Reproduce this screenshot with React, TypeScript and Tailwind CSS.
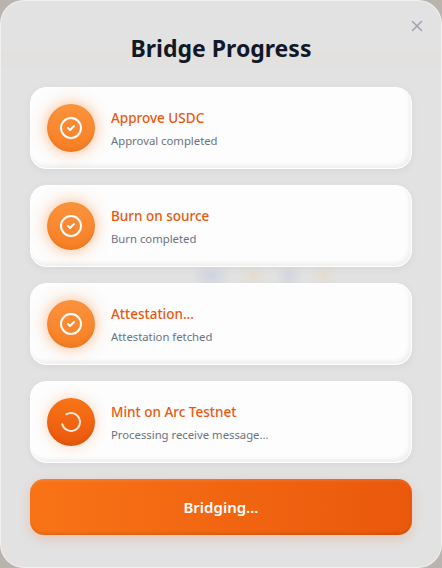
import { X } from 'lucide-react'

const steps = [
  { title: 'Approve USDC', detail: 'Approval completed', done: true },
  { title: 'Burn on source', detail: 'Burn completed', done: true },
  { title: 'Attestation...', detail: 'Attestation fetched', done: true },
  { title: 'Mint on Arc Testnet', detail: 'Processing receive message...', done: false },
]

function StepIcon({ done }: { done: boolean }) {
  if (!done) {
    return (
      <div className="flex h-12 w-12 shrink-0 items-center justify-center rounded-full bg-gradient-to-b from-[#f97316] to-[#ea580c] shadow-[0_0_14px_rgba(249,115,22,0.3),inset_0_-3px_5px_rgba(0,0,0,0.06)]">
        <svg width="24" height="24" viewBox="0 0 24 24" fill="none" stroke="#ffe9d8" strokeWidth="2" strokeLinecap="round">
          <path d="M7.3 4.3 A9 9 0 1 1 3.3 14.3" />
        </svg>
      </div>
    )
  }
  return (
    <div className="flex h-12 w-12 shrink-0 items-center justify-center rounded-full bg-gradient-to-b from-[#fb923c] to-[#f97f22] shadow-[0_0_16px_rgba(249,115,22,0.5),inset_0_-3px_5px_rgba(0,0,0,0.06)]">
      <svg width="24" height="24" viewBox="0 0 24 24" fill="none" stroke="#fff" strokeWidth="2" strokeLinecap="round" strokeLinejoin="round">
        <circle cx="12" cy="12" r="10" />
        <path d="M9 12l2 2 4-4" />
      </svg>
    </div>
  )
}

export default function App() {
  return (
    <div className="h-[568px] w-[442px] overflow-hidden bg-[#b9b4ad] font-['Noto_Sans',sans-serif]">
      <div className="relative flex h-full flex-col gap-4 rounded-3xl border border-white/50 bg-[#e2e2e2] bg-[radial-gradient(ellipse_20px_12px_at_210px_275px,#cfd3e2,transparent),radial-gradient(ellipse_13px_12px_at_252px_275px,#e6dccf,transparent),radial-gradient(ellipse_14px_12px_at_288px_275px,#d2d5e0,transparent),radial-gradient(ellipse_13px_12px_at_322px_275px,#e6dccf,transparent),linear-gradient(to_bottom,transparent_40px,#e3e1de_52px,transparent_70px)] px-[29px] pt-[31px]">
        <X className="absolute right-[15px] top-4 h-[18px] w-[18px] text-[#9ca3af]" strokeWidth={2} />
        <h2 className="mb-[7px] text-center text-[23px] font-bold leading-8 text-[#111827]">Bridge Progress</h2>
        {steps.map((s) => (
          <div
            key={s.title}
            className="flex h-[82px] items-center gap-4 rounded-2xl border border-white bg-[#fdfdfd] pl-4 shadow-[0_2px_8px_rgba(0,0,0,0.05),inset_-2px_-3px_4px_rgba(0,0,0,0.06)]"
          >
            <StepIcon done={s.done} />
            <div className="flex flex-col">
              <div className="text-[13.5px] font-medium leading-5 text-[#ea580c]">{s.title}</div>
              <div className="mt-[5px] text-[11.3px] leading-4 text-[#6b7280]">{s.detail}</div>
            </div>
          </div>
        ))}
        <button className="h-14 rounded-[14px] bg-gradient-to-r from-[#f97316] to-[#ea580c] text-[15px] font-semibold text-white shadow-[0_4px_12px_rgba(234,88,12,0.2),inset_0_-2px_3px_rgba(0,0,0,0.1),inset_0_2px_3px_rgba(255,255,255,0.1)]">
          Bridging...
        </button>
      </div>
    </div>
  )
}
